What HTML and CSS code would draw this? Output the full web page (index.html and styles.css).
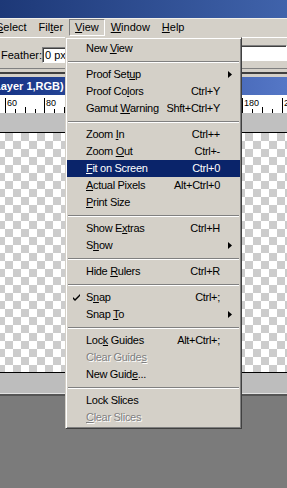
FILE: index.html
```html
<!doctype html>
<html lang="en">
  <head>
    <meta charset="UTF-8" />
    <title>View menu</title>
    <link rel="stylesheet" href="styles.css">
  </head>

  <body>
    <div class="app">
      <div class="titlebar"></div>

      <!-- Main menu bar -->
      <div class="menubar">
        <span class="mb-item mb-first"><u>S</u>elect</span>
        <span class="mb-item">Fil<u>t</u>er</span>
        <span class="mb-item mb-open"><u>V</u>iew</span>
        <span class="mb-item"><u>W</u>indow</span>
        <span class="mb-item"><u>H</u>elp</span>
      </div>

      <!-- Options bar -->
      <div class="options">
        <span class="opt-label">Feather:</span>
        <span class="opt-field">0 px</span>
        <span class="opt-field wide"></span>
      </div>
      <div class="ws-gap"></div>

      <!-- Document window -->
      <div class="doc">
        <div class="doc-title"><span>Layer 1,RGB)</span></div>
        <svg class="ruler" width="287" height="18" viewBox="0 0 287 18">
          <path
            d="M5.5 3V18M44.5 3V18M84.5 3V18M124.5 3V18M163.5 3V18M203.5 3V18M242.5 3V18M282.5 3V18"
            stroke="#000"
          />
          <path
            d="M15.5 14V18M35.5 14V18M54.5 14V18M74.5 14V18M94.5 14V18M114.5 14V18M134.5 14V18M153.5 14V18M173.5 14V18M193.5 14V18M213.5 14V18M233.5 14V18M252.5 14V18M272.5 14V18"
            stroke="#000"
          />
          <path
            d="M25.5 12V18M64.5 12V18M104.5 12V18M143.5 12V18M183.5 12V18M223.5 12V18M262.5 12V18"
            stroke="#000"
          />
          <g class="ruler-num">
            <text x="7" y="11">60</text>
            <text x="46" y="11">80</text>
            <text x="244" y="11">180</text>
            <text x="284" y="11">200</text>
          </g>
        </svg>
        <div class="doc-pad"></div>
        <div class="canvas"></div>
        <div class="doc-pad bottom"></div>
      </div>
      <div class="workspace"></div>

      <!-- View menu, dropped down -->
      <div class="menu">
        <div class="mi"><span></span><span>New <u>V</u>iew</span></div>
        <div class="sep"></div>
        <div class="mi">
          <span></span><span>Proof Set<u>u</u>p</span><span></span>
          <span class="arr"><svg width="4" height="7" viewBox="0 0 4 7"><path d="M0 0L4 3.5L0 7Z" /></svg></span>
        </div>
        <div class="mi"><span></span><span>Proof Co<u>l</u>ors</span><span class="key">Ctrl+Y</span></div>
        <div class="mi"><span></span><span>Gamut <u>W</u>arning</span><span class="key">Shft+Ctrl+Y</span></div>
        <div class="sep"></div>
        <div class="mi"><span></span><span>Zoom <u>I</u>n</span><span class="key">Ctrl++</span></div>
        <div class="mi"><span></span><span>Zoom <u>O</u>ut</span><span class="key">Ctrl+-</span></div>
        <div class="mi hot"><span></span><span><u>F</u>it on Screen</span><span class="key">Ctrl+0</span></div>
        <div class="mi"><span></span><span><u>A</u>ctual Pixels</span><span class="key">Alt+Ctrl+0</span></div>
        <div class="mi"><span></span><span><u>P</u>rint Size</span></div>
        <div class="sep"></div>
        <div class="mi"><span></span><span>Show E<u>x</u>tras</span><span class="key">Ctrl+H</span></div>
        <div class="mi">
          <span></span><span>S<u>h</u>ow</span><span></span>
          <span class="arr"><svg width="4" height="7" viewBox="0 0 4 7"><path d="M0 0L4 3.5L0 7Z" /></svg></span>
        </div>
        <div class="sep"></div>
        <div class="mi"><span></span><span>Hide <u>R</u>ulers</span><span class="key">Ctrl+R</span></div>
        <div class="sep"></div>
        <div class="mi">
          <span class="chk"><svg width="7" height="7" viewBox="0 0 7 7"><path d="M0 3L2 5L7 0V2L2 7L0 5Z" /></svg></span>
          <span>S<u>n</u>ap</span><span class="key">Ctrl+;</span>
        </div>
        <div class="mi">
          <span></span><span>Snap <u>T</u>o</span><span></span>
          <span class="arr"><svg width="4" height="7" viewBox="0 0 4 7"><path d="M0 0L4 3.5L0 7Z" /></svg></span>
        </div>
        <div class="sep"></div>
        <div class="mi"><span></span><span>Loc<u>k</u> Guides</span><span class="key">Alt+Ctrl+;</span></div>
        <div class="mi off"><span></span><span>Clear Guide<u>s</u></span></div>
        <div class="mi"><span></span><span>New Guid<u>e</u>...</span></div>
        <div class="sep"></div>
        <div class="mi"><span></span><span>Lock Slices</span></div>
        <div class="mi off"><span></span><span><u>C</u>lear Slices</span></div>
      </div>
    </div>
  </body>
</html>
```

FILE: styles.css
```css
body {
  margin: 0;
  font-family: "Liberation Sans", Arial, sans-serif;
  font-size: 11px;
  color: #000;
  background-color: #7b7b7b;
  overflow: hidden;
}

u {
  text-decoration-thickness: 1px;
  text-underline-offset: 1px;
}

.app {
  position: relative;
  width: 287px;
  height: 488px;
  overflow: hidden;
}

.titlebar {
  height: 18px;
  background: linear-gradient(to right, #1d3877, #4063ab);
}

/* Menu bar */
.menubar {
  display: flex;
  align-items: flex-start;
  height: 18px;
  border-top: 1px solid #f2f0ea;
  background-color: #d4d0c8;
  white-space: nowrap;
}

.mb-item {
  box-sizing: border-box;
  height: 17px;
  line-height: 15px;
  padding: 0 5px;
  border: 1px solid transparent;
}

.mb-first {
  margin-left: -10px;
}

.mb-open {
  border-color: #808080 #fff #fff #808080;
}

/* Options bar */
.options {
  display: flex;
  align-items: flex-start;
  height: 30px;
  border-top: 1px solid #fff;
  border-bottom: 1px solid #808080;
  background-color: #d4d0c8;
  white-space: nowrap;
}

.opt-label {
  width: 41px;
  margin-top: 10px;
  padding-left: 1px;
  line-height: 15px;
}

.opt-field {
  box-sizing: border-box;
  width: 130px;
  height: 16px;
  margin-top: 9px;
  padding-left: 2px;
  line-height: 14px;
  background-color: #fff;
  border: 1px solid;
  border-color: #808080 #fff #fff #808080;
  box-shadow: inset 1px 1px #404040;
}

.opt-field.wide {
  flex: 1;
  margin-top: 7px;
  margin-left: 30px;
}

.ws-gap {
  height: 8px;
  background: linear-gradient(#d4d0c8 0 3px, #404040 3px 5px, #d4d0c8 5px);
}

/* Document window */
.doc-title {
  height: 18px;
  line-height: 18px;
  color: #fff;
  font-weight: bold;
  white-space: nowrap;
  overflow: hidden;
  background: linear-gradient(to right, #163486, #5577c6);
}

.doc-title span {
  margin-left: -6px;
}

.ruler {
  display: block;
  background-color: #fff;
}

.ruler-num {
  font-family: "Liberation Sans", Arial, sans-serif;
  font-size: 9px;
}

.doc-pad {
  height: 19px;
  background-color: #c0c0c0;
  border-bottom: 1px solid #000;
}

.doc-pad.bottom {
  height: 20px;
  background-color: #bdbdbd;
  border-top: 1px solid #000;
  border-bottom: 1px solid #e2e2e2;
}

.canvas {
  height: 239px;
  background: repeating-conic-gradient(#cccccc 0 25%, #fff 0 50%) -3px 0 / 16px 16px;
}

.workspace {
  height: 100px;
  border-top: 2px solid #555;
  background-color: #7b7b7b;
}

/* Dropped down menu */
.menu {
  position: absolute;
  left: 65px;
  top: 37px;
  width: 177px;
  box-sizing: border-box;
  padding: 2px 1px;
  background-color: #d4d0c8;
  border: 1px solid;
  border-color: #d4d0c8 #404040 #404040 #d4d0c8;
  box-shadow: inset 1px 1px #fff, inset -1px -1px #808080;
  letter-spacing: -0.3px;
  white-space: nowrap;
}

.mi {
  display: grid;
  grid-template-columns: 19px 1fr auto 12px;
  height: 17px;
  line-height: 17px;
  padding-right: 8px;
}

.mi.hot {
  background-color: #0a246a;
  color: #fff;
}

.mi.off {
  color: #808080;
  text-shadow: 1px 1px 0 #fff;
}

.key {
  grid-column: 3;
}

.arr {
  grid-column: 4;
  display: flex;
  align-items: center;
  justify-content: flex-end;
}

.chk {
  display: flex;
  align-items: center;
  padding-left: 6px;
}

.sep {
  margin: 4px 1px 3px;
  border-top: 1px solid #808080;
  border-bottom: 1px solid #fff;
}
```
